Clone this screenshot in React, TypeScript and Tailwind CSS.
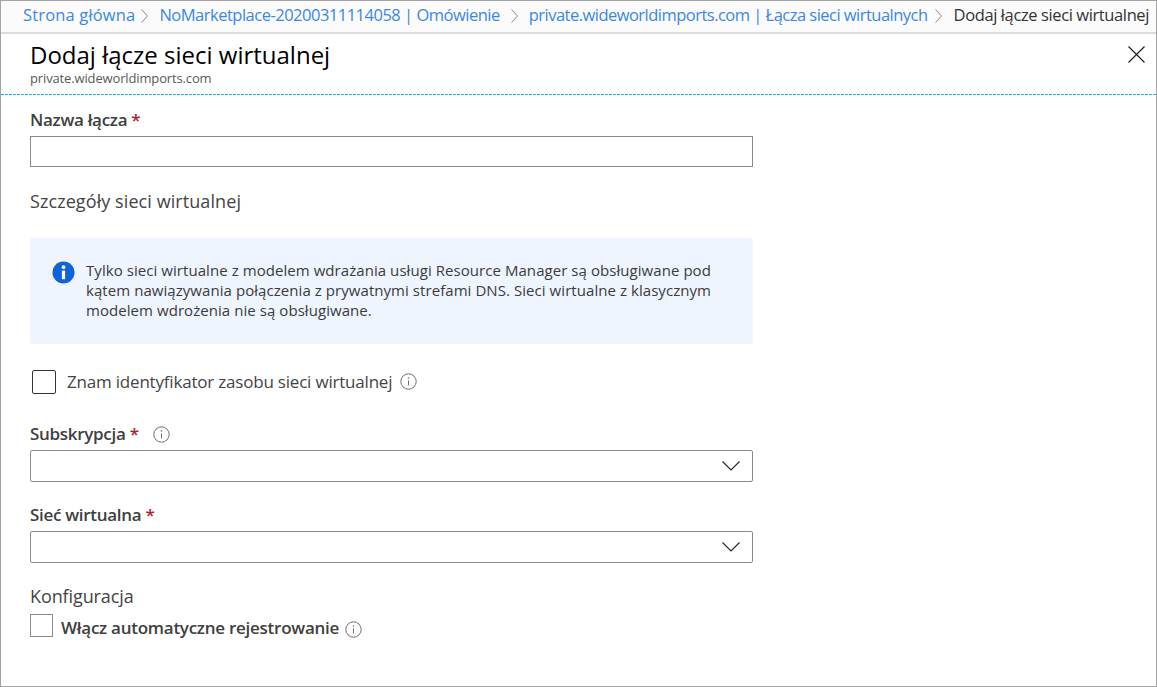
const font = "font-['Open_Sans',sans-serif]";

function InfoDot() {
  return (
    <svg className="shrink-0" width="17" height="17" viewBox="0 0 17 17" fill="none">
      <circle cx="8.5" cy="8.5" r="7.7" stroke="#6b6b6b" strokeWidth="1" />
      <path d="M8.5 7.4v5" stroke="#6b6b6b" strokeWidth="1" />
      <circle cx="8.5" cy="5" r="0.8" fill="#6b6b6b" />
    </svg>
  );
}

function Crumb({ label, className, gap }: { label: string; className: string; gap: string }) {
  return (
    <>
      <a className={`whitespace-nowrap text-[#3a86e8] ${className}`}>{label}</a>
      <svg className={`shrink-0 ${gap}`} width="7" height="14" viewBox="0 0 7 14" fill="none">
        <path d="M0.5 0.5 L6.5 7 L0.5 13.5" stroke="#8a8a8a" strokeWidth="1" />
      </svg>
    </>
  );
}

function Label({ text }: { text: string }) {
  return (
    <span className="text-[17px] leading-[22px] font-semibold tracking-[-0.3px] text-[#404040]">
      {text} <span className="text-[#a4262c]">*</span>
    </span>
  );
}

function Select() {
  return (
    <div className="flex h-[32px] w-[723px] items-center justify-end rounded-[2px] border border-[#8a8a8a] pr-[12px]">
      <svg width="18" height="10" viewBox="0 0 18 10" fill="none">
        <path d="M0.5 0.5 L9 9 L17.5 0.5" stroke="#222" strokeWidth="1.1" />
      </svg>
    </div>
  );
}

export default function App() {
  return (
    <div className={`${font} box-border h-[687px] w-[1157px] overflow-hidden border border-[#a3a3a3] bg-white`}>
      <nav className="flex h-[33px] items-center border-b-2 border-[#dcdcdc] bg-[#fbfbfb] pb-[2px] pl-[22px] text-[16.5px]">
        <Crumb label="Strona główna" className="tracking-[0.16px]" gap="mr-[11px] ml-[6px]" />
        <Crumb label="NoMarketplace-20200311114058 | Omówienie" className="tracking-[-0.5px]" gap="mr-[11px] ml-[11px]" />
        <Crumb label="private.wideworldimports.com | Łącza sieci wirtualnych" className="tracking-[-0.52px]" gap="mr-[12px] ml-[7px]" />
        <span className="whitespace-nowrap tracking-[-0.39px] text-[#333]">Dodaj łącze sieci wirtualnej</span>
      </nav>

      <header className="flex h-[60px] justify-between pr-[11px] pl-[29px]">
        <div>
          <h1 className="mt-[5px] text-[24px] leading-[32px] text-black">Dodaj łącze sieci wirtualnej</h1>
          <p className="text-[13px] leading-[14px] tracking-[-0.14px] text-[#595959]">private.wideworldimports.com</p>
        </div>
        <svg className="mt-[12px]" width="17" height="17" viewBox="0 0 17 17" fill="none">
          <path d="M0.5 0.5 L16.5 16.5 M16.5 0.5 L0.5 16.5" stroke="#222" strokeWidth="1.2" />
        </svg>
      </header>
      <div className="h-px bg-[repeating-linear-gradient(90deg,#00c4f5_0,#00c4f5_3px,transparent_3px,transparent_4px)]" />

      <main className="pl-[29px]">
        <div className="mt-[13px]">
          <Label text="Nazwa łącza" />
        </div>
        <div className="mt-[4px] h-[31px] w-[723px] border border-[#8a8a8a]" />

        <h2 className="mt-[22px] text-[18px] leading-[24px] tracking-[0.08px] text-[#444]">Szczegóły sieci wirtualnej</h2>

        <div className="mt-[25px] flex h-[106px] w-[723px] gap-[11px] rounded-[2px] bg-[#eef5fe] pt-[22px] pl-[22px]">
          <svg className="mt-[1px] shrink-0" width="23" height="23" viewBox="0 0 23 23">
            <circle cx="11.5" cy="11.5" r="11" fill="#0f62d9" />
            <circle cx="11.5" cy="6.2" r="1.9" fill="#fff" />
            <rect x="9.9" y="9.6" width="3.2" height="8.6" fill="#fff" />
          </svg>
          <p className="w-[640px] text-[15px] leading-[20px] tracking-[0.06px] text-[#3b3b3b]">
            Tylko sieci wirtualne z modelem wdrażania usługi Resource Manager są obsługiwane pod kątem nawiązywania połączenia z prywatnymi strefami DNS. Sieci wirtualne z klasycznym modelem wdrożenia nie są obsługiwane.
          </p>
        </div>

        <div className="mt-[25px] ml-[2px] flex h-[25px] items-center">
          <div className="h-[24px] w-[24px] rounded-[2px] border border-[#333]" />
          <span className="ml-[11px] text-[17px] tracking-[-0.2px] text-[#444]">Znam identyfikator zasobu sieci wirtualnej</span>
          <span className="ml-[8px]">
            <InfoDot />
          </span>
        </div>

        <div className="mt-[29px] flex h-[22px] items-center">
          <Label text="Subskrypcja" />
          <span className="ml-[14px]">
            <InfoDot />
          </span>
        </div>
        <div className="mt-[5px]">
          <Select />
        </div>

        <div className="mt-[22px] flex h-[22px] items-center">
          <Label text="Sieć wirtualna" />
        </div>
        <div className="mt-[5px]">
          <Select />
        </div>

        <h2 className="mt-[21px] text-[18px] leading-[24px] tracking-[-0.1px] text-[#444]">Konfiguracja</h2>

        <div className="mt-[6px] flex h-[23px] items-center">
          <div className="h-[23px] w-[23px] border border-[#8a8a8a]" />
          <span className="mt-[4px] ml-[8px] text-[17px] font-semibold tracking-[-0.26px] text-[#404040]">Włącz automatyczne rejestrowanie</span>
          <span className="mt-[8px] ml-[6px]">
            <InfoDot />
          </span>
        </div>
      </main>
    </div>
  );
}
